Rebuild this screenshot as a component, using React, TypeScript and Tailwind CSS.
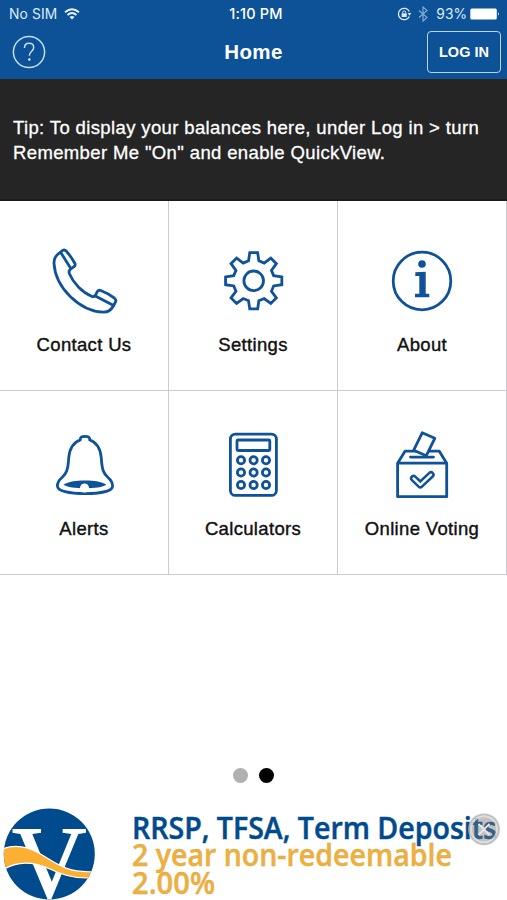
// Purpose: Home screen of the mobile banking app - status bar, header, balance tip,
// tile menu, pager dots and the promo banner

import type { ReactNode } from 'react';

const GEAR_TEETH = 8;

// Outline of the settings gear, one tooth at a time
const gearPoints = () => {
  const points: string[] = [];
  const add = (radius: number, degrees: number) => {
    const rad = (degrees * Math.PI) / 180;
    points.push(`${(36.7 + radius * Math.sin(rad)).toFixed(2)},${(35.8 - radius * Math.cos(rad)).toFixed(2)}`);
  };
  for (let i = 0; i < GEAR_TEETH; i++) {
    const angle = (i * 360) / GEAR_TEETH;
    add(20.6, angle - 14.5);
    add(28.4, angle - 8);
    add(28.4, angle + 8);
    add(20.6, angle + 14.5);
  }
  return points.join(' ');
};

function Icon({ children }: { children: ReactNode }) {
  return (
    <svg
      className="h-[72px] w-[72px]"
      viewBox="0 0 72 72"
      fill="none"
      stroke="#0f5299"
      strokeWidth="2.8"
      strokeLinecap="round"
      strokeLinejoin="round"
    >
      {children}
    </svg>
  );
}

const tiles: { label: string; icon: ReactNode }[] = [
  {
    label: 'Contact Us',
    icon: (
      <>
        <path d="M12.6 7.2L14.5 5.4Q16.6 4.2 18.4 6.2Q23 11.5 26.8 18.2Q27.8 20.3 26 21.6L23.2 23.6Q20.2 25.6 21.4 28.8C25.5 38.5 34.5 47.5 43.5 51.2Q46.5 52.4 47.7 50L49 47Q50.2 44.6 52.8 45.5Q60.5 48.5 66.5 53.2Q68.6 55 67.5 57L65.6 60.5C63.5 64.5 60.5 67.3 55.5 67.2C32 66.5 7.5 43 6 18.5C5.8 13.5 8.5 9.5 12.6 7.2Z" />
        <path d="M12.6 7.2L22.8 23.6M47.3 51L65.6 60.5" />
      </>
    )
  },
  {
    label: 'Settings',
    icon: (
      <>
        <polygon points={gearPoints()} strokeLinejoin="miter" />
        <circle cx="36.7" cy="35.8" r="9.8" />
      </>
    )
  },
  {
    label: 'About',
    icon: (
      <>
        <circle cx="36" cy="36" r="28.8" />
        <circle cx="36" cy="19" r="3.8" fill="#0f5299" stroke="none" />
        <path d="M29.3 27.3L39.7 26.8V48.7H43.3V52.3H29V48.7H33.3V31H29.3Z" fill="#0f5299" stroke="none" />
      </>
    )
  },
  {
    label: 'Alerts',
    icon: (
      <>
        <path d="M32.3 12C32 9.5 33.6 8.3 37 8.3S42 9.5 41.700 12C49.5 14.5 52.5 21 53.3 30C54 42 55.5 45.5 60 49.5C63.5 52.5 64.6 54.5 64.6 58C64.6 63 53 65.7 37 65.7S9.4 63 9.4 58C9.4 54.5 10.5 52.5 14 49.5C18.5 45.5 20 42 20.7 30C21.5 21 24.5 14.5 32.3 12Z" />
        <path d="M15.5 56.7C22 51 52 51 58.3 56.7C52 61.5 22 61.5 15.5 56.7Z" fill="#0f5299" stroke="none" />
        <circle cx="36.5" cy="60" r="4.5" fill="#fff" stroke="none" />
      </>
    )
  },
  {
    label: 'Calculators',
    icon: (
      <>
        <rect x="13.4" y="6.1" width="46" height="61.3" rx="5" />
        <rect x="20" y="12" width="32.8" height="10.5" rx="1" />
        {[32.3, 44.5, 57].map(cy =>
          [24, 36.6, 49].map(cx => <circle key={`${cx}-${cy}`} cx={cx} cy={cy} r="3.6" />)
        )}
      </>
    )
  },
  {
    label: 'Online Voting',
    icon: (
      <>
        <path d="M11.6 35.2H60.7V68.7H11.6ZM11.6 35.2L19 23.2H53.3L60.7 35.2" />
        <path d="M24.5 29.1H47.5" />
        <path d="M36.2 4.8L48.8 10.3L40.3 27.7L27.7 22.2Z" fill="#fff" />
        <path d="M27.6 50.4L34.3 56.8L45 46.7" strokeWidth="7.4" />
        <path d="M27.6 50.4L34.3 56.8L45 46.7" stroke="#fff" strokeWidth="2.4" />
      </>
    )
  }
];

function StatusBar() {
  return (
    <div className="flex h-7 items-center pr-[7px] pl-[9px] text-[13.8px] text-[#dcecff]">
      <div className="flex w-[168px] items-center gap-[7px]">
        <span className="tracking-[0.15px]">No SIM</span>
        <svg className="h-3 w-4" viewBox="0 0 16 12" fill="none" stroke="#e8f3ff" strokeWidth="1.9">
          <path d="M1 4.3Q8 -1.7 15 4.3M3.5 7Q8 3.2 12.5 7" />
          <path d="M5.5 9Q8 7 10.5 9L8 11.6Z" fill="#e8f3ff" stroke="none" />
        </svg>
      </div>
      <span className="flex-1 pl-[3px] text-center text-[14.5px] font-medium tracking-[0.2px] text-white">1:10 PM</span>
      <div className="flex w-[168px] items-center justify-end">
        <svg className="mr-[6px] h-[14px] w-[15px]" viewBox="0 0 15 14" fill="none" stroke="#dcecff" strokeWidth="1.3">
          <path d="M12.3 4.6A5.7 5.7 0 1 0 12.3 9.4" />
          <path d="M10.7 6H14.3L12.5 8.7Z" fill="#dcecff" stroke="none" />
          <rect x="4.7" y="6.3" width="5" height="3.7" fill="#dcecff" stroke="none" />
          <path d="M5.7 6.5V5.3Q5.7 4 7.2 4T8.7 5.3V6.5" strokeWidth="1" />
        </svg>
        <svg className="mr-[8px] h-4 w-[10px]" viewBox="0 0 10 16" fill="none" stroke="#7fa9d6" strokeWidth="1.2">
          <path d="M1 4.5L9 11.5L5 15V1L9 4.5L1 11.5" />
        </svg>
        <span className="mr-[3px]">93%</span>
        <svg className="h-3 w-[30px]" viewBox="0 0 30 12" fill="#fff">
          <rect x="0.3" y="0.5" width="26.5" height="11" rx="1.5" />
          <path d="M28 4Q29.8 6 28 8Z" />
        </svg>
      </div>
    </div>
  );
}

function Header() {
  return (
    <header className="h-[79px] bg-[#0d5196] font-['Inter','Liberation_Sans',sans-serif]">
      <StatusBar />
      <div className="flex h-12 items-center justify-between pr-[6px] pl-3 font-['Liberation_Sans',sans-serif]">
        <div className="w-[74px]">
          <svg className="h-[34px] w-[34px]" viewBox="0 0 34 34" fill="none" stroke="#c4defa" strokeWidth="1.5">
            <circle cx="17" cy="17" r="15.6" />
            <path d="M12.5 13C12.5 10 14.3 8.3 17.1 8.3S21.7 10 21.7 12.5C21.7 16.3 17.3 16.3 17.3 20.8" />
            <circle cx="17.3" cy="24.5" r="1.3" fill="#dcecff" stroke="none" />
          </svg>
        </div>
        <h1 className="pr-[6px] text-[20.5px] font-bold tracking-[0.4px] text-white">Home</h1>
        <button className="h-[42px] w-[74px] rounded-[4px] border-[1.5px] border-[#b9d6f5] pt-[2px] text-[14.5px] font-bold text-white">
          LOG IN
        </button>
      </div>
    </header>
  );
}

function Banner() {
  return (
    <div className="relative flex h-[92px]">
      <svg className="h-[92px] w-[132px] shrink-0" viewBox="0 0 132 92">
        <clipPath id="disc">
          <circle cx="49.3" cy="46" r="45.5" />
        </clipPath>
        <g clipPath="url(#disc)">
          <rect width="100" height="92" fill="#004b8d" />
          <text
            x="12"
            y="88.5"
            fontSize="103"
            fill="#fff"
            stroke="#fff"
            strokeWidth="1.2"
            className="font-['Liberation_Serif',serif]"
          >
            V
          </text>
          <path
            d="M0 42C14 35.500 26 38 38 44.500C56 55 66 65.500 95 63.500V69.500C78 71.500 64 68 50 61C34 54 18 51.500 0 63.500Z"
            fill="#fbb034"
            stroke="#fff"
            strokeWidth="1.2"
          />
        </g>
      </svg>
      <div className="pt-[6px] font-['Open_Sans',sans-serif] text-[30px] leading-[27.4px] font-semibold whitespace-nowrap text-[#eeb03f] [-webkit-text-stroke:0.4px_#e0a63c]">
        <p className="w-fit origin-left scale-x-[0.951] text-[#004b8d] [-webkit-text-stroke:0.5px_#004b8d]">
          RRSP, TFSA, Term Deposits
        </p>
        <p className="w-fit origin-left scale-x-[0.951]">2 year non-redeemable</p>
        <p className="w-fit origin-left scale-x-[0.970]">2.00%</p>
      </div>
      <button className="absolute top-[5px] right-[6px]" aria-label="Close banner">
        <svg className="h-[34px] w-[34px]" viewBox="0 0 34 34" fill="none">
          <circle cx="17" cy="16.3" r="13.500" fill="#777" fillOpacity="0.45" />
          <circle cx="17" cy="16.3" r="14.8" stroke="#b5b5b5" strokeWidth="2.200" strokeOpacity="0.85" />
          <circle cx="17" cy="16.3" r="12.800" stroke="#e4e4e4" strokeWidth="1.500" strokeOpacity="0.8" />
          <path d="M11.5 10.8L22.5 21.8M22.5 10.8L11.5 21.8" stroke="#e8e8e8" strokeWidth="1.8" />
        </svg>
      </button>
    </div>
  );
}

export default function App() {
  return (
    <div className="flex h-[900px] w-[507px] flex-col overflow-hidden bg-white font-['Liberation_Sans',sans-serif]">
      <Header />

      {/* Balance tip */}
      <div className="h-[122px] border-b-2 border-[#1b1b1b] bg-[#252525] pt-[37px] pl-[13px] text-[18.5px] leading-[24.5px] tracking-[0.37px] whitespace-nowrap text-white [-webkit-text-stroke:0.3px_white]">
        <p>Tip: To display your balances here, under Log in &gt; turn</p>
        <p>Remember Me "On" and enable QuickView.</p>
      </div>

      {/* Tile menu */}
      <div className="grid grid-cols-[169px_169px_169px] grid-rows-[190px_184px]">
        {tiles.map(({ label, icon }, index) => (
          <button
            key={label}
            className={`flex flex-col items-center border-r border-b border-[#c9ccd0] ${index < 3 ? 'pt-[44px]' : 'pt-[37px]'}`}
          >
            <Icon>{icon}</Icon>
            <span
              className={`text-[18.5px] leading-[28px] tracking-[0.33px] whitespace-nowrap text-[#111] [-webkit-text-stroke:0.4px_#111] ${index < 3 ? 'mt-[14px]' : 'mt-[15px]'}`}
            >
              {label}
            </span>
          </button>
        ))}
      </div>

      <div className="flex-1" />

      {/* Pager dots */}
      <div className="mb-[25px] flex justify-center gap-[11px]">
        <span className="h-[15px] w-[15px] rounded-full bg-[#b0b0b0]" />
        <span className="h-[15px] w-[15px] rounded-full bg-black" />
      </div>

      <Banner />
    </div>
  );
}
